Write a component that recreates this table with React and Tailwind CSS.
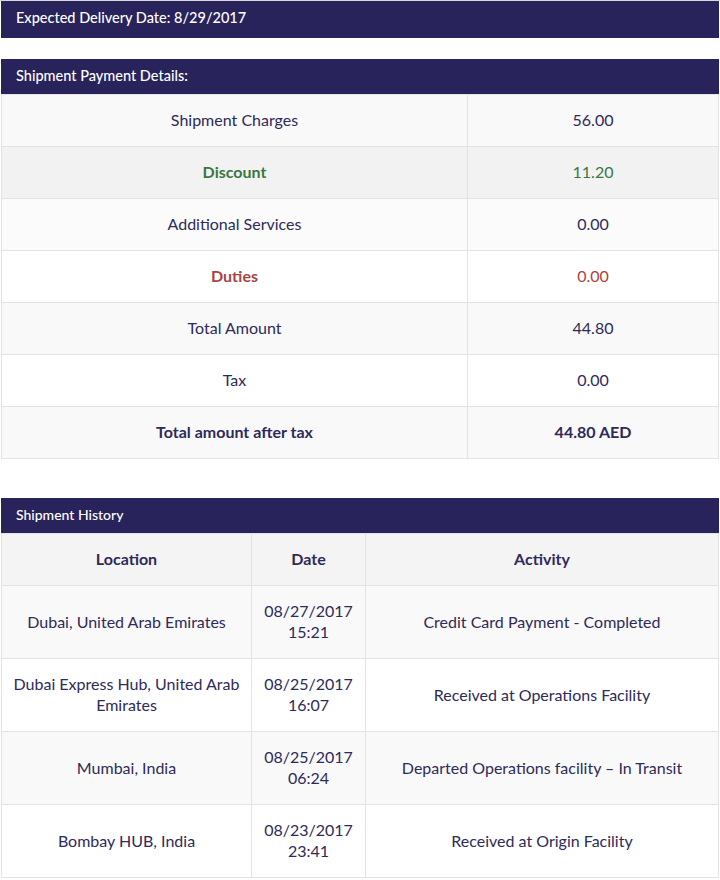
import React from 'react';

const payment = [
    { label: 'Shipment Charges', value: '56.00', bg: 'bg-[#f9f9f9]' },
    { label: 'Discount', value: '11.20', bg: 'bg-[#f2f2f2]', tone: 'text-[#3c763d]', bold: true },
    { label: 'Additional Services', value: '0.00', bg: 'bg-[#fbfbfb]' },
    { label: 'Duties', value: '0.00', bg: 'bg-white', tone: 'text-[#a94442]', bold: true },
    { label: 'Total Amount', value: '44.80', bg: 'bg-[#f9f9f9]' },
    { label: 'Tax', value: '0.00', bg: 'bg-white' },
    { label: 'Total amount after tax', value: '44.80 AED', bg: 'bg-[#f9f9f9]', bold: true, boldValue: true },
];

const history = [
    { location: 'Dubai, United Arab Emirates', date: '08/27/2017', time: '15:21', activity: 'Credit Card Payment - Completed' },
    { location: 'Dubai Express Hub, United Arab Emirates', date: '08/25/2017', time: '16:07', activity: 'Received at Operations Facility' },
    { location: 'Mumbai, India', date: '08/25/2017', time: '06:24', activity: 'Departed Operations facility – In Transit' },
    { location: 'Bombay HUB, India', date: '08/23/2017', time: '23:41', activity: 'Received at Origin Facility' },
];

function Bar({ children, className = '' }) {
    return (
        <div className={`bg-[#29235c] text-white font-medium px-[15px] ${className}`}>
            {children}
        </div>
    );
}

function App() {
    return (
        <div className="w-[720px] min-h-screen bg-white text-[#2e2a5a] px-[1px] border-t border-[#d8d8d8]" style={{ fontFamily: 'Lato, "Noto Sans", sans-serif' }}>
            <Bar className="h-[37px] pt-[6px] leading-[22px] text-[14.5px]">Expected Delivery Date: 8/29/2017</Bar>

            <Bar className="mt-[21px] h-[35px] pt-[6px] leading-[22px] text-[14.5px]">Shipment Payment Details:</Bar>
            <table className="w-full border-collapse text-[16px] leading-[21px]">
                <tbody>
                    {payment.map((row) => (
                        <tr key={row.label} className={row.bg}>
                            <td className={`w-[466px] border border-[#e3e3e3] text-center pt-[14px] pb-[16px] ${row.tone || ''} ${row.bold ? 'font-bold' : ''}`}>
                                {row.label}
                            </td>
                            <td className={`border border-[#e3e3e3] text-center pt-[14px] pb-[16px] ${row.tone || ''} ${row.boldValue ? 'font-bold' : ''}`}>
                                {row.value}
                            </td>
                        </tr>
                    ))}
                </tbody>
            </table>

            <Bar className="mt-[39px] h-[35px] pt-[6px] leading-[22px] text-[14px]">Shipment History</Bar>
            <table className="w-full border-collapse text-[16px] leading-[21px]">
                <thead>
                    <tr className="bg-[#f4f4f4]">
                        <th className="w-[250px] border border-[#e3e3e3] pt-[14px] pb-[16px] font-bold">Location</th>
                        <th className="w-[114px] border border-[#e3e3e3] pt-[14px] pb-[16px] font-bold">Date</th>
                        <th className="border border-[#e3e3e3] pt-[14px] pb-[16px] font-bold">Activity</th>
                    </tr>
                </thead>
                <tbody>
                    {history.map((h, i) => (
                        <tr key={h.location} className={i % 2 === 0 ? 'bg-[#f9f9f9]' : 'bg-white'}>
                            <td className="border border-[#e3e3e3] text-center pt-[14px] pb-[16px] px-[8px]">{h.location}</td>
                            <td className="border border-[#e3e3e3] text-center pt-[14px] pb-[16px]">
                                {h.date}<br />{h.time}
                            </td>
                            <td className="border border-[#e3e3e3] text-center pt-[14px] pb-[16px] px-[8px]">{h.activity}</td>
                        </tr>
                    ))}
                </tbody>
            </table>
        </div>
    );
}

export default App;
